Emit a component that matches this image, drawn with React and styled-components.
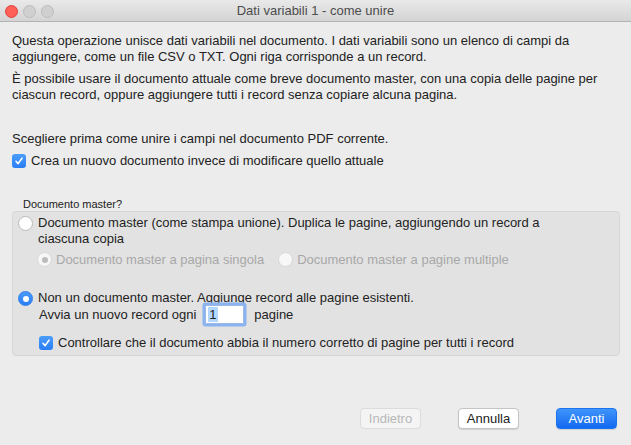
import styled, { createGlobalStyle } from "styled-components"

const GlobalStyle = createGlobalStyle`
  html, body {
    margin: 0;
    padding: 0;
    background: #ececec;
  }
  body {
    font-family: "Liberation Sans", "Inter", sans-serif;
    font-size: 13px;
    color: #222;
  }
`

const Window = styled.div`
  width: 631px;
  height: 445px;
  display: flex;
  flex-direction: column;
  background: #ececec;
  overflow: hidden;
`

const TitleBar = styled.div`
  height: 21px;
  flex: none;
  position: relative;
  display: flex;
  align-items: center;
  justify-content: center;
  background: linear-gradient(#e9e9e9, #d4d4d4);
  border-bottom: 1px solid #b4b4b4;
  color: #4c4c4c;
  font-size: 13px;
`

const Lights = styled.div`
  position: absolute;
  left: 5px;
  top: 5px;
  display: flex;
  gap: 5px;
`

const Light = styled.span`
  width: 11px;
  height: 11px;
  border-radius: 50%;
  background: ${(p) => (p.$red ? "#fe5f57" : "#d0d0d0")};
  border: 0.5px solid ${(p) => (p.$red ? "#e0443e" : "#bcbcbc")};
`

const Body = styled.div`
  padding: 11px 12px 0 12px;
  flex: 1;
`

const Para = styled.p`
  margin: 0 0 6px 0;
  line-height: 16px;
  white-space: nowrap;
`

const Spaced = styled(Para)`
  margin-top: ${(p) => p.$top || 0}px;
`

const Row = styled.div`
  display: flex;
  align-items: center;
  gap: ${(p) => p.$gap || 4}px;
  line-height: 16px;
  white-space: nowrap;
  color: ${(p) => (p.$disabled ? "#a8a8a8" : "inherit")};
  margin-top: ${(p) => p.$top || 0}px;
`

const CheckBox = styled.span`
  width: 14px;
  height: 14px;
  flex: none;
  border-radius: 3px;
  background: linear-gradient(#4b9dfb, #2a7ef5);
  display: flex;
  align-items: center;
  justify-content: center;
`

const Radio = styled.span`
  width: 15px;
  height: 15px;
  flex: none;
  border-radius: 50%;
  box-sizing: border-box;
  display: flex;
  align-items: center;
  justify-content: center;
  background: ${(p) => (p.$on ? "linear-gradient(#4a9cfb, #2a7ef5)" : "#fff")};
  border: 1px solid ${(p) => (p.$on ? "#2f7ef0" : p.$disabled ? "#d2d2d2" : "#b9b9b9")};
  opacity: ${(p) => (p.$disabled ? 0.75 : 1)};
  &::after {
    content: "";
    display: ${(p) => (p.$dot ? "block" : "none")};
    width: 6px;
    height: 6px;
    border-radius: 50%;
    background: ${(p) => (p.$on ? "#fff" : "#b0b0b0")};
  }
`

const GroupLabel = styled.div`
  margin: 28px 0 0 11px;
  font-size: 11px;
  line-height: 14px;
`

const Group = styled.div`
  margin-right: -1px;
  background: #e2e2e2;
  border: 1px solid #d6d6d6;
  border-radius: 4px;
  padding: 3px 6px 5px 5px;
  height: 145px;
  box-sizing: border-box;
`

const Option = styled.div`
  display: flex;
  gap: 5px;
  line-height: 16px;
  white-space: nowrap;
  align-items: flex-start;
  margin-top: ${(p) => p.$top || 0}px;
  & > span:first-child {
    margin-top: 1px;
  }
`

const SubRadios = styled.div`
  display: flex;
  gap: 14px;
  margin: 3px 0 0 19px;
  height: 19px;
`

const Indented = styled.div`
  margin-left: 21px;
`

const NumberRow = styled(Row)`
  gap: 0;
  margin-top: -1px;
`

const NumberInput = styled.span`
  width: 39px;
  height: 19px;
  margin: 0 10px 0 9px;
  background: #fff;
  border: 1px solid #9ab9e6;
  box-shadow: 0 0 0 2.5px #8ab3ef;
  border-radius: 1px;
  display: flex;
  align-items: center;
  padding-left: 2px;
  box-sizing: border-box;
`

const Selected = styled.span`
  background: #b3d7ff;
  line-height: 15px;
  padding: 0 1px;
`

const Footer = styled.div`
  display: flex;
  justify-content: flex-end;
  gap: 37px;
  padding: 0 14px 16px 0;
`

const Button = styled.button`
  width: 61px;
  height: 21px;
  font-family: inherit;
  font-size: 13px;
  border-radius: 4px;
  padding: 0;
  border: 1px solid ${(p) => (p.$primary ? "#1a74f0" : p.$disabled ? "#dcdcdc" : "#c4c4c4")};
  background: ${(p) => (p.$primary ? "linear-gradient(#3f95fb, #1369f0)" : p.$disabled ? "#f4f4f4" : "#fff")};
  color: ${(p) => (p.$primary ? "#fff" : p.$disabled ? "#b8b8b8" : "#222")};
  box-shadow: ${(p) => (p.$disabled ? "none" : "0 1px 1px rgba(0,0,0,0.12)")};
`

const Check = () => (
  <CheckBox>
    <svg width="10" height="10" viewBox="0 0 10 10">
      <path d="M2 5.3 L4.1 7.6 L8 2.2" fill="none" stroke="#fff" strokeWidth="1.6" strokeLinecap="round" strokeLinejoin="round" />
    </svg>
  </CheckBox>
)

const App = () => {
  return (
    <Window>
      <GlobalStyle />
      <TitleBar>
        <Lights>
          <Light $red />
          <Light />
          <Light />
        </Lights>
        Dati variabili 1 - come unire
      </TitleBar>
      <Body>
        <Para>
          Questa operazione unisce dati variabili nel documento. I dati variabili sono un elenco di campi da
          <br />
          aggiungere, come un file CSV o TXT. Ogni riga corrisponde a un record.
        </Para>
        <Para>
          È possibile usare il documento attuale come breve documento master, con una copia delle pagine per
          <br />
          ciascun record, oppure aggiungere tutti i record senza copiare alcuna pagina.
        </Para>
        <Spaced $top={28}>Scegliere prima come unire i campi nel documento PDF corrente.</Spaced>
        <Row $gap={5}>
          <Check />
          Crea un nuovo documento invece di modificare quello attuale
        </Row>
        <GroupLabel>Documento master?</GroupLabel>
        <Group>
          <Option>
            <Radio />
            <span>
              Documento master (come stampa unione). Duplica le pagine, aggiungendo un record a
              <br />
              ciascuna copia
            </span>
          </Option>
          <SubRadios>
            <Row $disabled $gap={4}>
              <Radio $disabled $dot />
              Documento master a pagina singola
            </Row>
            <Row $disabled $gap={4}>
              <Radio $disabled />
              Documento master a pagine multiple
            </Row>
          </SubRadios>
          <Option $top={21}>
            <Radio $on $dot />
            <span>Non un documento master. Aggiunge record alle pagine esistenti.</span>
          </Option>
          <Indented>
            <NumberRow>
              Avvia un nuovo record ogni
              <NumberInput>
                <Selected>1</Selected>
              </NumberInput>
              pagine
            </NumberRow>
            <Row $gap={5} $top={11}>
              <Check />
              Controllare che il documento abbia il numero corretto di pagine per tutti i record
            </Row>
          </Indented>
        </Group>
      </Body>
      <Footer>
        <Button $disabled>Indietro</Button>
        <Button>Annulla</Button>
        <Button $primary>Avanti</Button>
      </Footer>
    </Window>
  )
}

export default App
